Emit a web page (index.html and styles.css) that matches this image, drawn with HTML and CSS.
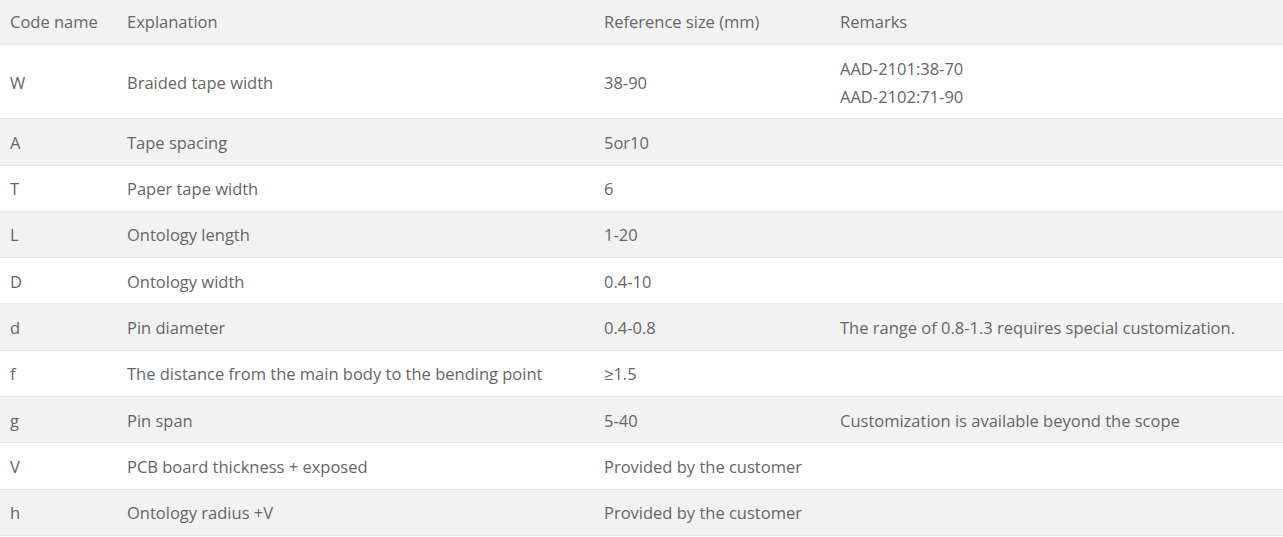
FILE: index.html
```html
<!DOCTYPE html>
<html lang="en">
<head>
<meta charset="utf-8">
<title>Parameters</title>
<link rel="stylesheet" href="styles.css">
</head>
<body>
<table class="spec">
  <colgroup>
    <col class="c1"><col class="c2"><col class="c3"><col class="c4">
  </colgroup>
  <thead>
    <tr class="head"><th>Code name</th><th>Explanation</th><th>Reference size (mm)</th><th>Remarks</th></tr>
  </thead>
  <tbody>
    <tr><td>W</td><td>Braided tape width</td><td>38-90</td><td>AAD-2101:38-70<br>AAD-2102:71-90</td></tr>
    <tr class="alt"><td>A</td><td>Tape spacing</td><td>5or10</td><td></td></tr>
    <tr><td>T</td><td>Paper tape width</td><td>6</td><td></td></tr>
    <tr class="alt"><td>L</td><td>Ontology length</td><td>1-20</td><td></td></tr>
    <tr><td>D</td><td>Ontology width</td><td>0.4-10</td><td></td></tr>
    <tr class="alt"><td>d</td><td>Pin diameter</td><td>0.4-0.8</td><td>The range of 0.8-1.3 requires special customization.</td></tr>
    <tr><td>f</td><td>The distance from the main body to the bending point</td><td>≥1.5</td><td></td></tr>
    <tr class="alt"><td>g</td><td>Pin span</td><td>5-40</td><td>Customization is available beyond the scope</td></tr>
    <tr><td>V</td><td>PCB board thickness + exposed</td><td>Provided by the customer</td><td></td></tr>
    <tr class="alt"><td>h</td><td>Ontology radius +V</td><td>Provided by the customer</td><td></td></tr>
  </tbody>
</table>
</body>
</html>
```
FILE: styles.css
```css
html, body {
  margin: 0;
  padding: 0;
  background: #ffffff;
}
body {
  font-family: "Open Sans", "Noto Sans", sans-serif;
  font-size: 16.5px;
  color: #666666;
}
.spec {
  width: 100%;
  border-collapse: collapse;
  table-layout: fixed;
}
.c1 { width: 117px; }
.c2 { width: 477px; }
.c3 { width: 236px; }
.spec th,
.spec td {
  text-align: left;
  font-weight: normal;
  padding: 9.5px 10px 7.8px;
  line-height: 28px;
  border-bottom: 1px solid #e6e6e6;
  vertical-align: middle;
}
.spec .head th {
  padding: 8px 10px;
  background: #f2f2f2;
}
.spec .alt td {
  background: #f2f2f2;
}
```
